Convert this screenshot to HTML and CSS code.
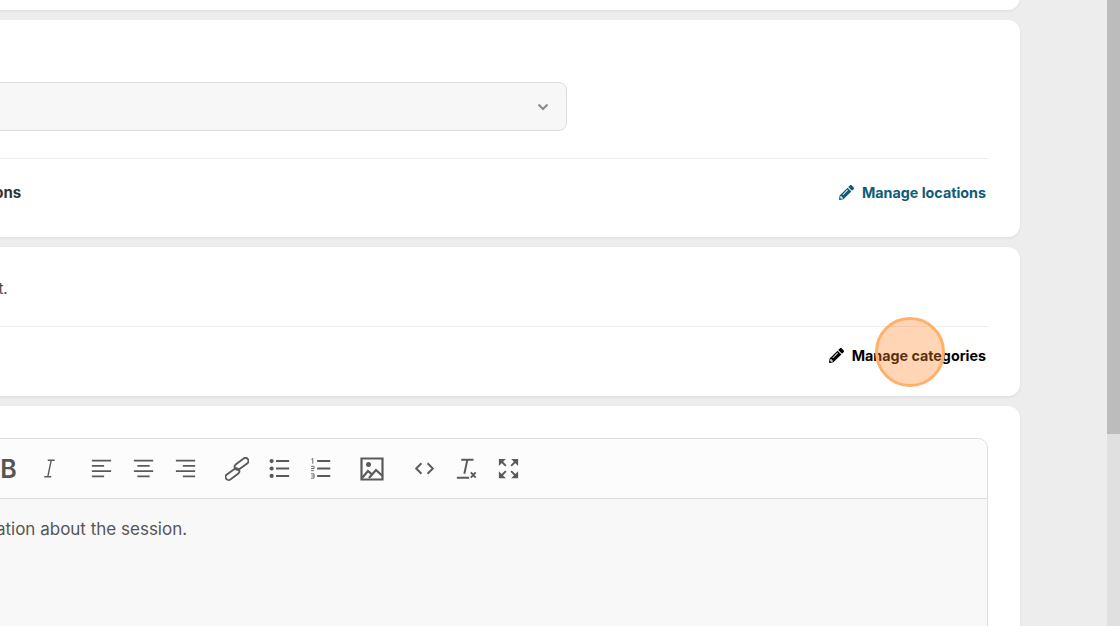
FILE: index.html
```html
<!DOCTYPE html>
<html lang="en">
<head>
  <meta charset="UTF-8" />
  <title>Session settings</title>
  <link rel="stylesheet" href="styles.css">
</head>
<body>
  <div class="page">
    <main class="content">
      <section class="card card-top"></section>

      <section class="card card-location">
        <div class="select-box">
          <svg class="chevron" viewBox="0 0 12 8"><path d="M1.500 1.500 6 6l4.500-4.500"/></svg>
        </div>
        <hr class="rule rule-location" />
        <div class="manage-row">
          <span class="row-label">Session locations</span>
          <a class="manage-link link-teal" href="#">
            <svg class="pencil" viewBox="0 0 512 512"><path d="M497.900 142.100l-46.100 46.100c-4.700 4.700-12.300 4.700-17 0l-111-111c-4.700-4.700-4.700-12.300 0-17l46.100-46.100c18.700-18.700 49.100-18.700 67.900 0l60.100 60.100c18.800 18.700 18.800 49.100 0 67.900zM284.200 99.800L21.600 362.400.4 483.900c-2.900 16.400 11.400 30.600 27.800 27.800l121.500-21.300 262.600-262.600c4.700-4.700 4.700-12.300 0-17l-111-111c-4.800-4.700-12.400-4.700-17.100 0zM124.100 339.900c-5.500-5.500-5.500-14.300 0-19.800l154-154c5.500-5.500 14.300-5.500 19.800 0s5.500 14.300 0 19.800l-154 154c-5.500 5.500-14.300 5.500-19.800 0zM88 424h48v36.300l-64.500 11.300-31.100-31.100L51.700 376H88v48z"/></svg>
            Manage locations
          </a>
        </div>
      </section>

      <section class="card card-category">
        <p class="help-text">Choose the categories for this event.</p>
        <hr class="rule rule-category" />
        <div class="manage-row manage-row-end">
          <a class="manage-link link-dark" href="#">
            <svg class="pencil" viewBox="0 0 512 512"><path d="M497.900 142.100l-46.100 46.100c-4.700 4.700-12.300 4.700-17 0l-111-111c-4.700-4.700-4.700-12.300 0-17l46.100-46.100c18.700-18.700 49.100-18.700 67.900 0l60.100 60.100c18.800 18.700 18.800 49.100 0 67.900zM284.200 99.800L21.600 362.400.4 483.900c-2.900 16.400 11.400 30.600 27.800 27.800l121.500-21.300 262.600-262.600c4.700-4.700 4.700-12.300 0-17l-111-111c-4.800-4.700-12.400-4.700-17.100 0zM124.100 339.900c-5.500-5.500-5.500-14.300 0-19.800l154-154c5.500-5.500 14.300-5.500 19.800 0s5.500 14.300 0 19.800l-154 154c-5.500 5.500-14.300 5.500-19.800 0zM88 424h48v36.300l-64.500 11.300-31.100-31.100L51.700 376H88v48z"/></svg>
            Manage categories
          </a>
        </div>
      </section>

      <section class="card card-editor">
        <div class="editor">
          <div class="toolbar">
            <div class="tool-group">
              <span class="tool tool-bold">B</span>
              <span class="tool"><svg viewBox="0 0 24 24"><path class="thin-italic" d="M10 2.500h8M6 21.500h8M14 2.500l-4 19"/></svg></span>
            </div>
            <div class="tool-group">
              <span class="tool"><svg viewBox="0 0 24 24"><path d="M1 3h22M1 9h14M1 15h22M1 21h14"/></svg></span>
              <span class="tool"><svg viewBox="0 0 24 24"><path d="M1 3h22M5 9h14M1 15h22M5 21h14"/></svg></span>
              <span class="tool"><svg viewBox="0 0 24 24"><path d="M1 3h22M9 9h14M1 15h22M9 21h14"/></svg></span>
            </div>
            <div class="tool-group">
              <span class="tool"><svg class="icon-link" viewBox="0 0 24 24"><g transform="rotate(-36 12 12)"><rect x="-2.500" y="10.500" width="15.500" height="6" rx="3"/><rect x="11" y="7.500" width="15.500" height="6" rx="3"/></g></svg></span>
              <span class="tool"><svg viewBox="0 0 24 24"><path d="M8 3.500h15M8 12h15M8 20.500h15"/><circle class="dot" cx="3" cy="3.500" r="2.400"/><circle class="dot" cx="3" cy="12" r="2.400"/><circle class="dot" cx="3" cy="20.500" r="2.400"/></svg></span>
              <span class="tool"><svg viewBox="1 0 24 24"><path d="M8 3.500h15M8 12h15M8 20.500h15"/><path class="thin" d="M1.500 1.500l1.500-1v6M.5 9.500h4v2.500H.5v2.500h4M.5 18h4v5h-4M1.500 20.500h3"/></svg></span>
            </div>
            <div class="tool-group tool-group-media">
              <span class="tool"><svg class="icon-image" viewBox="0 0 24 24"><path d="M1.500 1.500h21v21h-21z"/><path d="M2 21l6-7 4 3.500M9 21l7-8 6.500 6"/><circle class="dot" cx="8.500" cy="7.500" r="2.500"/></svg></span>
            </div>
            <div class="tool-group">
              <span class="tool"><svg viewBox="0 0 24 24"><path d="M8.500 6 2.500 12l6 6M15.500 6l6 6-6 6"/></svg></span>
              <span class="tool"><svg viewBox="0 0 24 24"><path d="M6 2h14M13 2 9.500 18M1 22.500h14M17 16.500l5.500 6M22.500 16.500l-5.500 6"/></svg></span>
              <span class="tool"><svg viewBox="0 0 24 24"><path class="solid" d="M1 1h8L1 9zM23 1h-8l8 8zM1 23h8l-8-8zM23 23h-8l8-8z"/><path d="M4 4l5 5M20 4l-5 5M4 20l5-5M20 20l-5-5"/></svg></span>
            </div>
          </div>
          <div class="editor-body">Add more information about the session.</div>
        </div>
      </section>
    </main>
    <div class="scrollbar"><div class="scroll-thumb"></div></div>
  </div>
  <div class="click-marker"></div>
</body>
</html>
```

FILE: styles.css
```css
html, body {
  margin: 0;
  height: 100%;
  overflow: hidden;
}
body {
  font-family: Inter, "Liberation Sans", sans-serif;
  background-color: #ededed;
  color: #333;
}
.page {
  display: flex;
  height: 626px;
  overflow: hidden;
}
.content {
  flex: none;
  width: 1320px;
  margin-left: -300px;
  margin-right: 87px;
  display: flex;
  flex-direction: column;
  gap: 10px;
}
.card {
  background-color: #fff;
  border-radius: 12px;
  box-shadow: 0 1px 3px rgba(0, 0, 0, 0.07);
  padding: 0 32px;
  flex: none;
}
.card-top {
  height: 30px;
  margin-top: -20px;
}
.card-location {
  padding-top: 62px;
  padding-bottom: 35px;
}
.card-category {
  padding-top: 32px;
  padding-bottom: 30px;
}
.card-editor {
  padding-top: 32px;
  height: 300px;
}
.select-box {
  width: 816px;
  height: 47px;
  background-color: #f7f7f7;
  border: 1px solid #ddd;
  border-radius: 8px;
  display: flex;
  align-items: center;
  justify-content: flex-end;
  padding-right: 17px;
}
.chevron {
  width: 12px;
  height: 8px;
  fill: none;
  stroke: #8c8c8c;
  stroke-width: 2.200;
}
.rule {
  border: none;
  border-top: 1px solid #ededed;
  margin: 0;
}
.rule-location {
  margin-top: 27px;
}
.rule-category {
  margin-top: 27px;
}
.manage-row {
  display: flex;
  align-items: center;
  justify-content: space-between;
  height: 20px;
  padding-right: 2px;
}
.card-location .manage-row {
  margin-top: 23px;
}
.card-category .manage-row {
  margin-top: 18px;
  margin-bottom: 1px;
}
.manage-row-end {
  justify-content: flex-end;
}
.row-label {
  font-size: 15px;
  font-weight: 700;
  margin-left: 160px;
}
.help-text {
  margin: 0 0 0 14px;
  font-size: 15px;
  line-height: 20px;
  color: #444;
}
.manage-link {
  display: flex;
  align-items: center;
  gap: 8px;
  font-size: 14.300px;
  font-weight: 700;
  text-decoration: none;
}
.link-teal {
  color: #0f5b78;
}
.link-dark {
  color: #000;
}
.pencil {
  width: 15px;
  height: 15px;
  fill: currentColor;
}
.editor {
  border: 1px solid #ddd;
  border-radius: 10px;
  overflow: hidden;
  height: 100%;
  background-color: #f8f8f8;
}
.toolbar {
  display: flex;
  gap: 10px;
  height: 59px;
  align-items: center;
  padding-left: 253px;
  background-color: #fcfcfc;
  border-bottom: 1px solid #ddd;
}
.tool-group {
  display: flex;
}
.tool-group-media {
  margin-left: -1px;
}
.tool {
  width: 42px;
  height: 42px;
  display: flex;
  align-items: center;
  justify-content: center;
  color: #555;
}
.tool svg {
  width: 21px;
  height: 21px;
  fill: none;
  stroke: #5a5a5a;
  stroke-width: 2.200;
}
.tool svg.icon-image {
  width: 24px;
  height: 24px;
}
.tool svg.icon-link {
  width: 24px;
  height: 24px;
  stroke-width: 1.900;
}
.tool .dot,
.tool .solid {
  fill: #5a5a5a;
  stroke: none;
}
.tool .thin {
  stroke-width: 1;
}
.tool .thin-italic {
  stroke-width: 1.600;
}
.tool-bold {
  font-size: 25px;
  font-weight: 600;
  padding-left: 3px;
  box-sizing: border-box;
}
.editor-body {
  padding: 19px 0 0 128px;
  font-size: 17px;
  line-height: 22px;
  color: #555;
}
.scrollbar {
  flex: none;
  width: 13px;
  height: 100%;
  margin-left: auto;
  background-color: #e0e0e0;
}
.scroll-thumb {
  height: 434px;
  background-color: #bcbcbc;
}
.click-marker {
  position: absolute;
  left: 875px;
  top: 317px;
  width: 64px;
  height: 64px;
  border: 3px solid #ffb06a;
  border-radius: 50%;
  background-color: rgba(255, 135, 43, 0.35);
}
```
